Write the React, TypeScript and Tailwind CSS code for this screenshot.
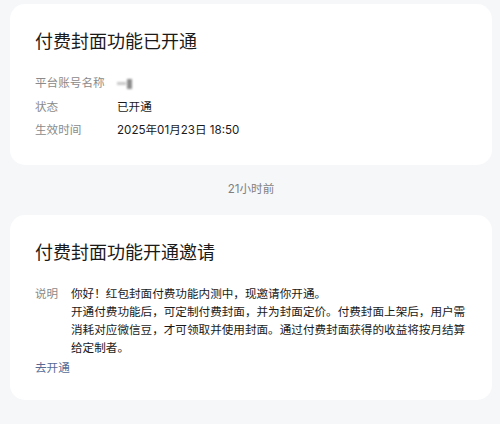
const font = "font-['Inter','Noto_Sans_CJK_SC',sans-serif]";

function InfoRow({ label, children }: { label: string; children: React.ReactNode }) {
  return (
    <div className="flex h-[23.5px] items-center">
      <span className="w-[82px] shrink-0 text-[#8a8a8a]">{label}</span>
      <span className="text-[#1a1a1a]">{children}</span>
    </div>
  );
}

function App() {
  return (
    <div className={`${font} min-h-[424px] bg-[#f6f7f9] pt-[4px] pl-[10px] pr-[8px] text-[11.6px]`}>
      <div className="rounded-[15px] bg-white px-[25px] pt-[25px] pb-[22px]">
        <h1 className="text-[18px] leading-[26px] text-[#1a1a1a]">付费封面功能已开通</h1>
        <div className="mt-[17px]">
          <InfoRow label="平台账号名称">
            <span className="flex items-center gap-[1px] blur-[1px]">
              <span className="h-[3px] w-[9px] bg-[#c8c8c8]" />
              <span className="h-[10px] w-[5px] bg-[#8c8c8c]" />
            </span>
          </InfoRow>
          <InfoRow label="状态">已开通</InfoRow>
          <InfoRow label="生效时间">2025年01月23日 18:50</InfoRow>
        </div>
      </div>

      <div className="flex h-[50px] items-center justify-center text-[11.6px] text-[#7f7f7f]">
        21小时前
      </div>

      <div className="rounded-[15px] bg-white px-[25px] pt-[25px] pb-[23px]">
        <h2 className="text-[18px] leading-[26px] text-[#1a1a1a]">付费封面功能开通邀请</h2>
        <div className="mt-[19px] flex leading-[18px]">
          <span className="w-[36px] shrink-0 text-[#8a8a8a]">说明</span>
          <div className="text-[#1a1a1a]">
            <p>你好！红包封面付费功能内测中，现邀请你开通。</p>
            <p>
              开通付费功能后，可定制付费封面，并为封面定价。付费封面上架后，用户需消耗对应微信豆，才可领取并使用封面。通过付费封面获得的收益将按月结算给定制者。
            </p>
          </div>
        </div>
        <div className="mt-[2px] leading-[18px] text-[#576b95]">去开通</div>
      </div>
    </div>
  );
}

export default App;
